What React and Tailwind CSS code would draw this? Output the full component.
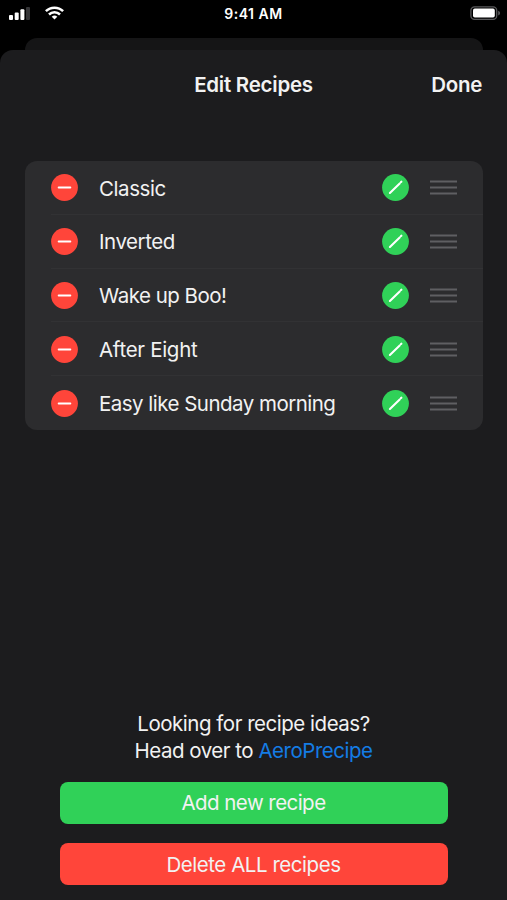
const recipes = [
  { name: 'Classic', tracking: 'tracking-[-0.42px]' },
  { name: 'Inverted', tracking: 'tracking-[-0.45px]' },
  { name: 'Wake up Boo!', tracking: 'tracking-[-0.5px]' },
  { name: 'After Eight', tracking: 'tracking-[-0.3px]' },
  { name: 'Easy like Sunday morning', tracking: 'tracking-[-0.52px]' },
];

function StatusBar() {
  return (
    <div className="flex h-[38px] items-start justify-between pt-[6px] pr-[6px] pl-[9px] text-white">
      <div className="flex w-[99px] gap-[14px]">
        <svg className="mt-px h-[14px] w-[22px]" viewBox="0 0 22 14">
          <rect x="0" y="8" width="4" height="5" rx="1" fill="white" />
          <rect x="5.7" y="5.4" width="4" height="7.6" rx="1" fill="white" />
          <rect x="11.4" y="2.3" width="4" height="10.7" rx="1" fill="white" />
          <rect x="17" y="0" width="4" height="13" rx="1" fill="#353537" />
        </svg>
        <svg className="h-[14px] w-[19px]" viewBox="0 0 19 14" fill="none" stroke="white" strokeWidth="2.5">
          <path d="M.9 5.2a12.2 12.2 0 0 1 17.2 0" />
          <path d="M4 8.5a7.8 7.8 0 0 1 11 0" />
          <path d="M9.5 13.6 6.7 10.8a4 4 0 0 1 5.6 0Z" fill="white" stroke="none" />
        </svg>
      </div>
      <div className="-mt-px text-[14px] leading-[17px] font-semibold tracking-[0.5px]">9:41 AM</div>
      <div className="flex w-[102px] justify-end">
        <svg className="h-[15px] w-[31px]" viewBox="0 0 31 15">
          <rect x=".9" y=".8" width="25.8" height="12.6" rx="3.6" fill="none" stroke="#59595b" strokeWidth="1.3" />
          <rect x="3" y="2.6" width="21.8" height="9" rx="1.8" fill="white" />
          <path d="M28.2 4.7c2.5 1 2.5 3.8 0 4.8Z" fill="#59595b" />
        </svg>
      </div>
    </div>
  );
}

function RecipeRow({ name, tracking, last }) {
  return (
    <div className="flex h-[53.8px] pl-[26px]">
      <div className={'flex flex-1 items-center border-b pt-px ' + (last ? 'border-transparent' : 'border-[#323234]')}>
        <svg className="h-[27px] w-[27px]" viewBox="0 0 27 27">
          <circle cx="13.5" cy="13.5" r="13.4" fill="#ff453a" />
          <path d="M7.7 13.5h11.6" stroke="white" strokeWidth="2" strokeLinecap="round" />
        </svg>
        <span className={'ml-[21px] flex-1 pt-[2px] whitespace-nowrap ' + tracking}>{name}</span>
        <svg className="h-[27px] w-[27px]" viewBox="0 0 27 27">
          <circle cx="13.5" cy="13.5" r="13.4" fill="#30d158" />
          <path d="m7.9 19 9.8-9.6M19 8.1l.4-.4" stroke="white" strokeWidth="2.1" strokeLinecap="round" />
        </svg>
        <svg className="mr-[26px] ml-[21px] h-[15px] w-[27px]" viewBox="0 0 27 15">
          <path d="M0 1.6h27M0 7.5h27M0 13.4h27" stroke="#5f5f62" strokeWidth="2" />
        </svg>
      </div>
    </div>
  );
}

export default function App() {
  return (
    <div className="flex h-[900px] w-[507px] flex-col overflow-hidden bg-black font-['Inter',sans-serif] text-[20.5px] text-[#f2f2f2]">
      <StatusBar />
      <div className="mr-[24px] ml-[25px] h-[12px] shrink-0 rounded-t-[12px] bg-[#151516]" />
      <div className="flex flex-1 flex-col rounded-t-[13px] bg-[#1c1c1e]">
        <header className="grid h-[69px] grid-cols-[1fr_auto_1fr] items-center px-[25px] pt-px font-semibold">
          <h1 className="col-start-2 tracking-[-0.25px]">Edit Recipes</h1>
          <button className="justify-self-end tracking-[-0.3px]">Done</button>
        </header>
        <main className="mr-[24px] ml-[25px] mt-[42px] rounded-[12px] bg-[#2c2c2e]">
          {recipes.map((recipe, i) => (
            <RecipeRow key={recipe.name} {...recipe} last={i === recipes.length - 1} />
          ))}
        </main>
        <footer className="mt-auto flex flex-col px-[59.5px] pb-[15px] text-center">
          <p className="leading-[27px] tracking-[-0.48px]">
            Looking for recipe ideas?
            <br />
            Head over to <a className="text-[#147ce5]">AeroPrecipe</a>
          </p>
          <button className="mt-[18px] h-[42px] rounded-[8px] bg-[#30d158] pt-[2px] tracking-[-0.55px]">Add new recipe</button>
          <button className="mt-[19.5px] h-[42px] rounded-[8px] bg-[#ff453a] pt-[2px] tracking-[-0.45px]">Delete ALL recipes</button>
        </footer>
      </div>
    </div>
  );
}
